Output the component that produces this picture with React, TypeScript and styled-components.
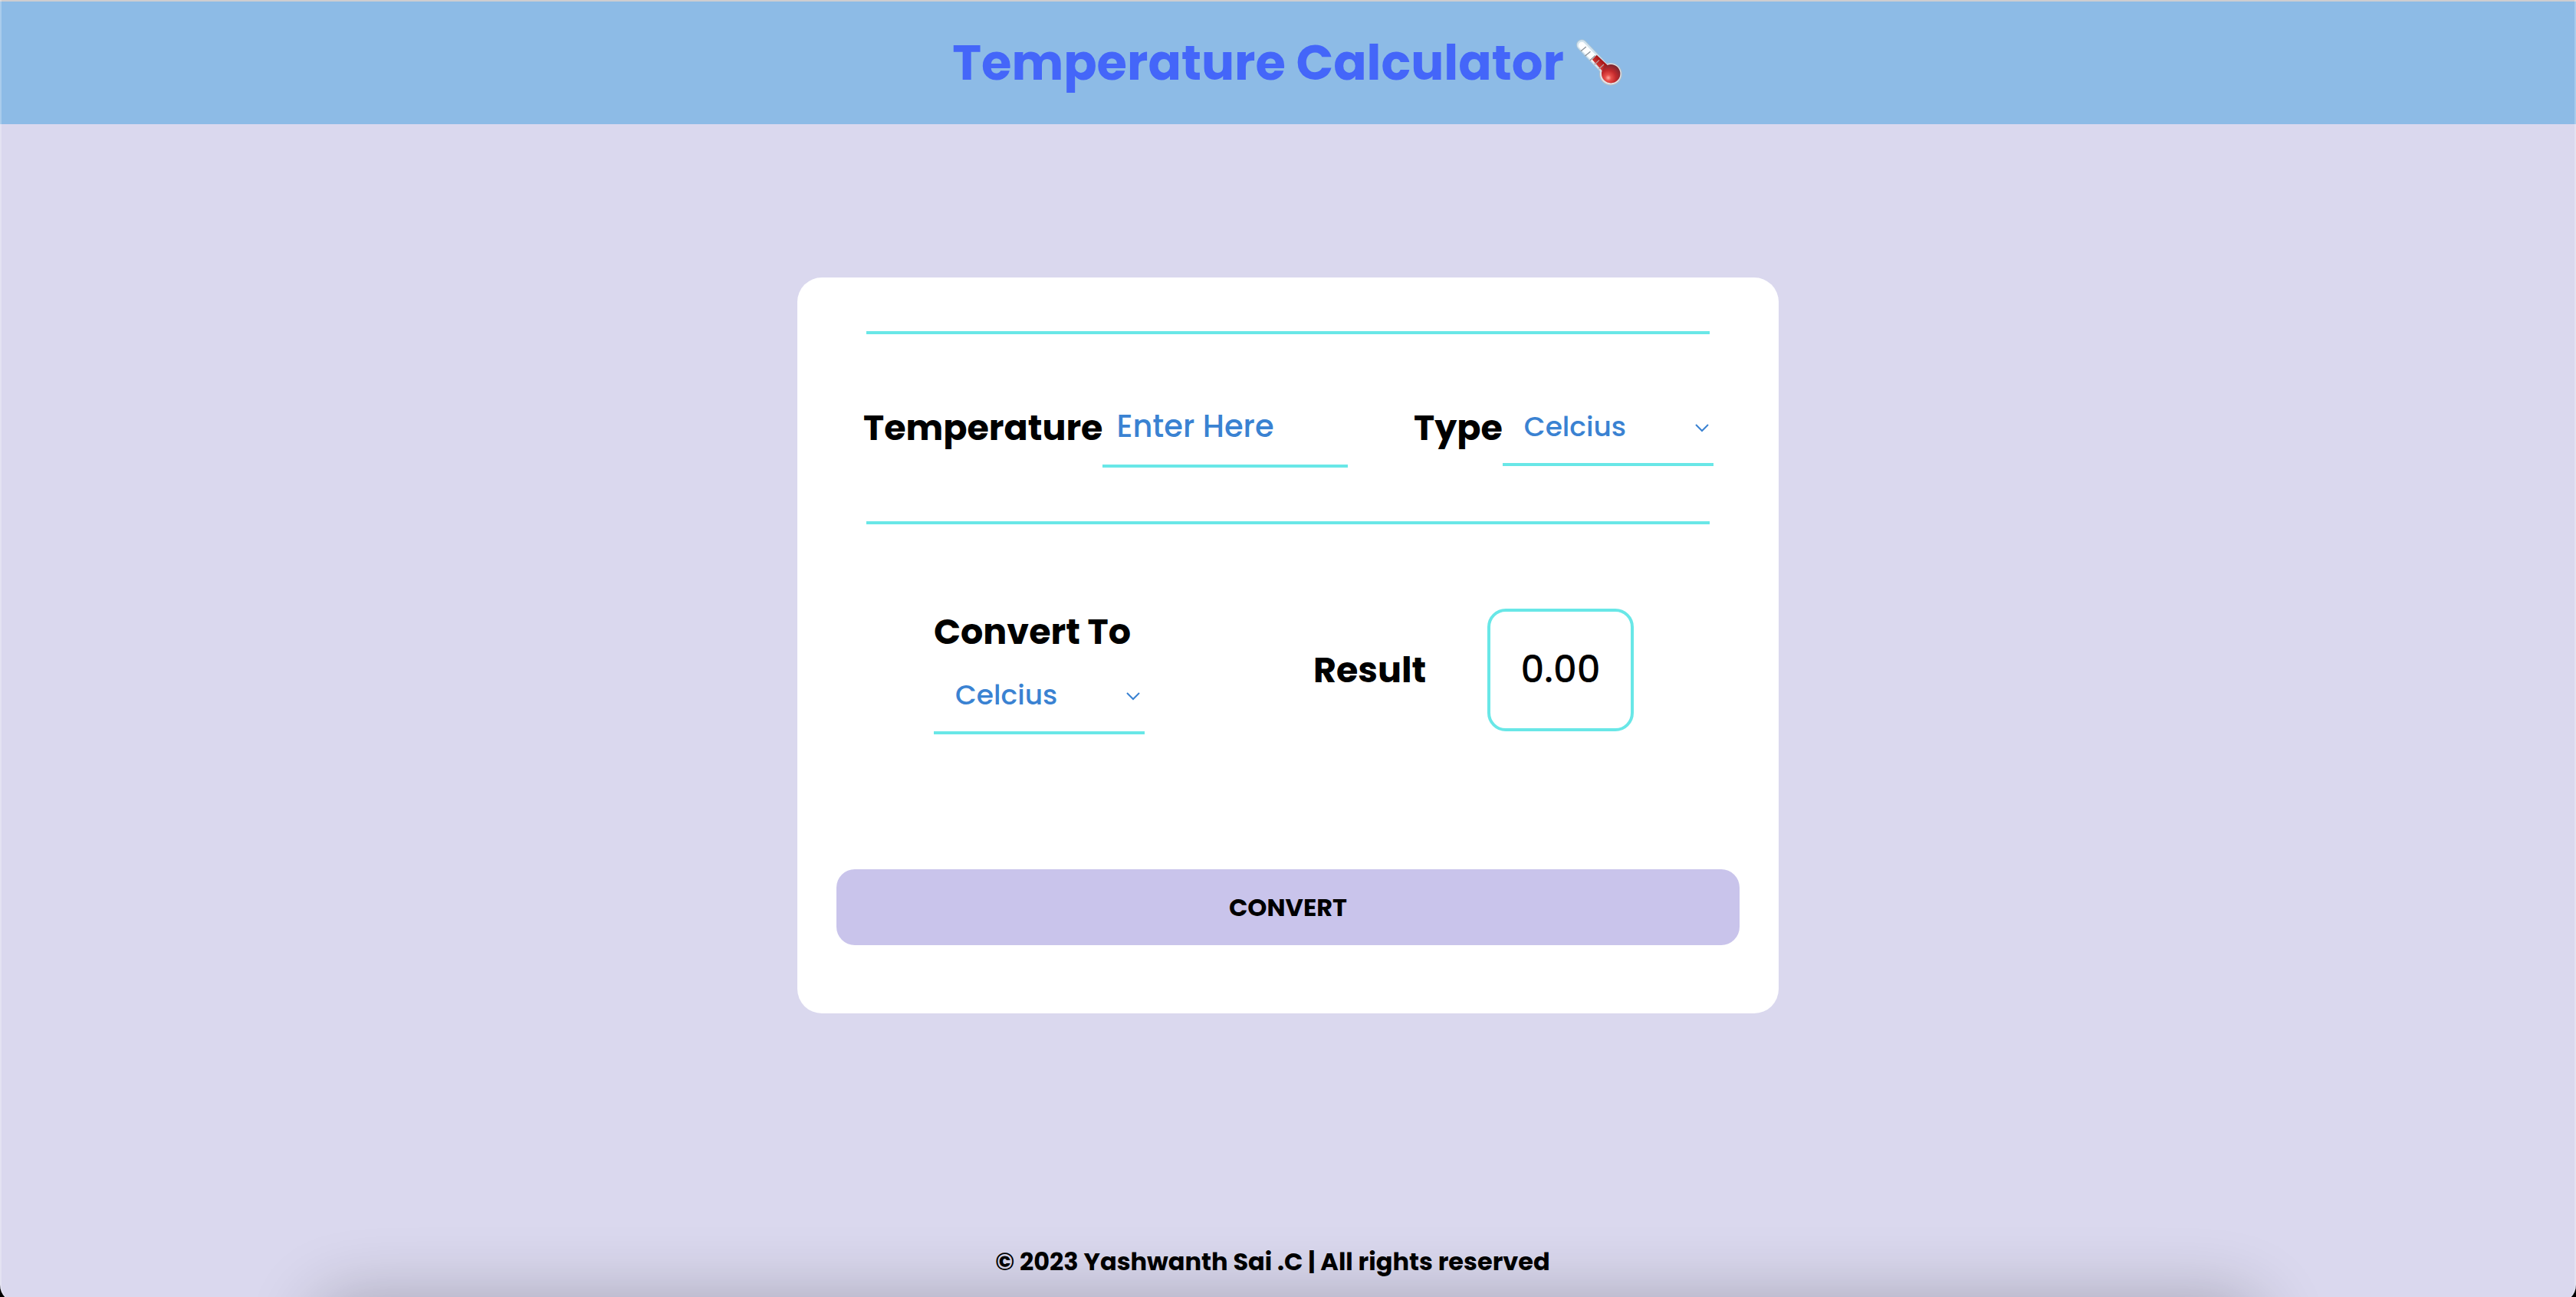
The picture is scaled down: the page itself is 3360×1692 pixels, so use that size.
import { FormEvent, useState } from "react";
import styled, { createGlobalStyle } from "styled-components";

const aqua = "#69e7e7";
const blue = "#3a82d2";

const GlobalStyle = createGlobalStyle`
  * { box-sizing: border-box; }
  body {
    margin: 0;
    background: #dad8ee;
    color: #000;
    font-family: Poppins, Inter, sans-serif;
  }
  button, input, select { font-family: inherit; }
`;

const Page = styled.div`
  display: flex;
  flex-direction: column;
  min-height: 100vh;
`;

const Header = styled.header`
  display: flex;
  justify-content: center;
  padding: 32px;
  border-top: 2px solid #cecdcf;
  background: #8dbbe6;
`;

const Title = styled.h1`
  display: flex;
  align-items: center;
  gap: 14px;
  margin: 0;
  color: #4466f9;
  font-size: 64px;
  font-weight: 700;
  line-height: 96px;
`;

const Main = styled.main`
  flex: 1;
  display: flex;
  flex-direction: column;
  align-items: center;
  padding: 200px 24px 48px;
`;

const Card = styled.form`
  display: flex;
  flex-direction: column;
  align-items: center;
  width: 100%;
  max-width: 1280px;
  padding: 70px 51px 89px;
  border-radius: 32px;
  background: #fff;
`;

const Rule = styled.hr`
  width: 100%;
  max-width: 1100px;
  height: 4px;
  margin: 0;
  border: 0;
  background: ${aqua};
`;

const InputRow = styled.div`
  display: flex;
  justify-content: space-between;
  align-items: center;
  width: 100%;
  max-width: 1108px;
  min-height: 244px;
`;

const ResultRow = styled(InputRow)`
  min-height: 380px;
  margin-bottom: 70px;
  padding: 0 103px 0 92px;
`;

const Field = styled.div<{ $width: number }>`
  display: flex;
  align-items: center;
  justify-content: space-between;
  width: ${(p) => p.$width}px;
`;

const StackedField = styled.div`
  display: flex;
  flex-direction: column;
`;

const Label = styled.label`
  font-size: 46px;
  font-weight: 700;
  line-height: 68px;
  white-space: nowrap;
`;

const NumberInput = styled.input`
  flex: none;
  width: 320px;
  height: 104px;
  padding: 0 18px;
  border: 0;
  border-bottom: 4px solid ${aqua};
  outline: 0;
  background: transparent;
  color: ${blue};
  font-size: 40px;
  font-weight: 500;
  &::placeholder { color: ${blue}; opacity: 1; }
`;

const SelectWrap = styled.div`
  position: relative;
  flex: none;
  width: 275px;
`;

const Select = styled.select`
  display: block;
  appearance: none;
  width: 100%;
  height: 100px;
  padding: 0 28px;
  border: 0;
  border-bottom: 4px solid ${aqua};
  border-radius: 0;
  outline: 0;
  background: transparent;
  color: ${blue};
  font-size: 36px;
  font-weight: 500;
`;

const Chevron = styled.svg`
  position: absolute;
  top: 44px;
  right: 6px;
  width: 18px;
  height: 12px;
  pointer-events: none;
`;

const Result = styled.output`
  display: flex;
  align-items: center;
  justify-content: center;
  min-width: 191px;
  height: 160px;
  padding: 0 24px;
  border: 4px solid ${aqua};
  border-radius: 24px;
  font-size: 48px;
  font-weight: 500;
`;

const ConvertButton = styled.button`
  width: 100%;
  height: 99px;
  border: 0;
  border-radius: 24px;
  background: #c9c4eb;
  color: #000;
  font-size: 32px;
  font-weight: 700;
`;

const Footer = styled.footer`
  padding: 0 40px 22px 0;
  font-size: 32px;
  font-weight: 700;
  line-height: 48px;
  text-align: center;
`;

/* Rounded window edge with the soft shadow rising from below it. */
const WindowFrame = styled.div`
  position: fixed;
  inset: 0 0 -8px;
  border: solid rgba(255, 255, 255, 0.25);
  border-width: 0 2px;
  border-radius: 0 0 24px 24px;
  box-shadow: 0 0 0 24px #000;
  pointer-events: none;
`;

const DockShadow = styled.div`
  position: fixed;
  top: 100vh;
  left: 412px;
  right: 412px;
  height: 160px;
  border-radius: 40px;
  box-shadow: 0 0 90px rgba(0, 0, 0, 0.24);
  pointer-events: none;
`;

const scales = ["Celcius", "Fahrenheit", "Kelvin"];

function toCelcius(value: number, from: string) {
  if (from === "Fahrenheit") return ((value - 32) * 5) / 9;
  if (from === "Kelvin") return value - 273.15;
  return value;
}

function convert(value: number, from: string, to: string) {
  const c = toCelcius(value, from);
  if (to === "Fahrenheit") return (c * 9) / 5 + 32;
  if (to === "Kelvin") return c + 273.15;
  return c;
}

function Thermometer() {
  return (
    <svg width="64" height="64" viewBox="70 58 194 194" aria-hidden="true">
      <defs>
        <radialGradient id="bulb" cx="0.36" cy="0.72" r="0.8">
          <stop offset="0" stopColor="#ffaaa2" />
          <stop offset="0.2" stopColor="#e8504a" />
          <stop offset="0.5" stopColor="#c42a2c" />
          <stop offset="1" stopColor="#6e2530" />
        </radialGradient>
        <linearGradient id="mercury" x1="0" y1="1" x2="1" y2="0">
          <stop offset="0.25" stopColor="#dd453f" />
          <stop offset="0.7" stopColor="#9c0d10" />
        </linearGradient>
      </defs>
      <path d="M98 84L190 180" stroke="#a9c3d5" strokeWidth="44" strokeLinecap="round" />
      <circle cx="212" cy="200" r="45" fill="#b3bdc6" />
      <path d="M98 84L190 180" stroke="#d3e4ef" strokeWidth="39" strokeLinecap="round" />
      <circle cx="212" cy="199" r="42" fill="#e0e4e8" />
      <path d="M98 86L150 140" stroke="#fff" strokeWidth="27" strokeLinecap="round" />
      <path d="M139 142L157 124L202 166L180 188Z" fill="url(#mercury)" />
      <circle cx="213" cy="198" r="37" fill="url(#bulb)" />
      <path
        d="M94 109L115 91M111 128L132 110M130 146L151 126"
        stroke="#8b9299"
        strokeWidth="4"
        fill="none"
      />
      <path d="M148 162L167 144M165 180L185 161" stroke="#bd9a9b" strokeWidth="4" fill="none" />
    </svg>
  );
}

interface ScaleSelectProps {
  id: string;
  value: string;
  onChange: (value: string) => void;
}

function ScaleSelect({ id, value, onChange }: ScaleSelectProps) {
  return (
    <SelectWrap>
      <Select id={id} value={value} onChange={(e) => onChange(e.target.value)}>
        {scales.map((s) => (
          <option key={s}>{s}</option>
        ))}
      </Select>
      <Chevron viewBox="0 0 18 12" aria-hidden="true">
        <path d="M1 2L9 10L17 2" fill="none" stroke={blue} strokeWidth="2" />
      </Chevron>
    </SelectWrap>
  );
}

export default function App() {
  const [temperature, setTemperature] = useState("");
  const [from, setFrom] = useState("Celcius");
  const [to, setTo] = useState("Celcius");
  const [result, setResult] = useState("0.00");

  const submit = (e: FormEvent) => {
    e.preventDefault();
    setResult(convert(Number(temperature), from, to).toFixed(2));
  };

  return (
    <Page>
      <GlobalStyle />
      <Header>
        <Title>
          Temperature Calculator
          <Thermometer />
        </Title>
      </Header>
      <Main>
        <Card onSubmit={submit}>
          <Rule />
          <InputRow>
            <Field $width={632}>
              <Label htmlFor="temperature">Temperature</Label>
              <NumberInput
                id="temperature"
                inputMode="decimal"
                placeholder="Enter Here"
                value={temperature}
                onChange={(e) => setTemperature(e.target.value)}
              />
            </Field>
            <Field $width={390}>
              <Label htmlFor="from">Type</Label>
              <ScaleSelect id="from" value={from} onChange={setFrom} />
            </Field>
          </InputRow>
          <Rule />
          <ResultRow>
            <StackedField>
              <Label htmlFor="to">Convert To</Label>
              <ScaleSelect id="to" value={to} onChange={setTo} />
            </StackedField>
            <Field $width={418}>
              <Label htmlFor="result">Result</Label>
              <Result id="result">{result}</Result>
            </Field>
          </ResultRow>
          <ConvertButton type="submit">CONVERT</ConvertButton>
        </Card>
      </Main>
      <Footer>© 2023 Yashwanth Sai .C | All rights reserved</Footer>
      <DockShadow />
      <WindowFrame />
    </Page>
  );
}
